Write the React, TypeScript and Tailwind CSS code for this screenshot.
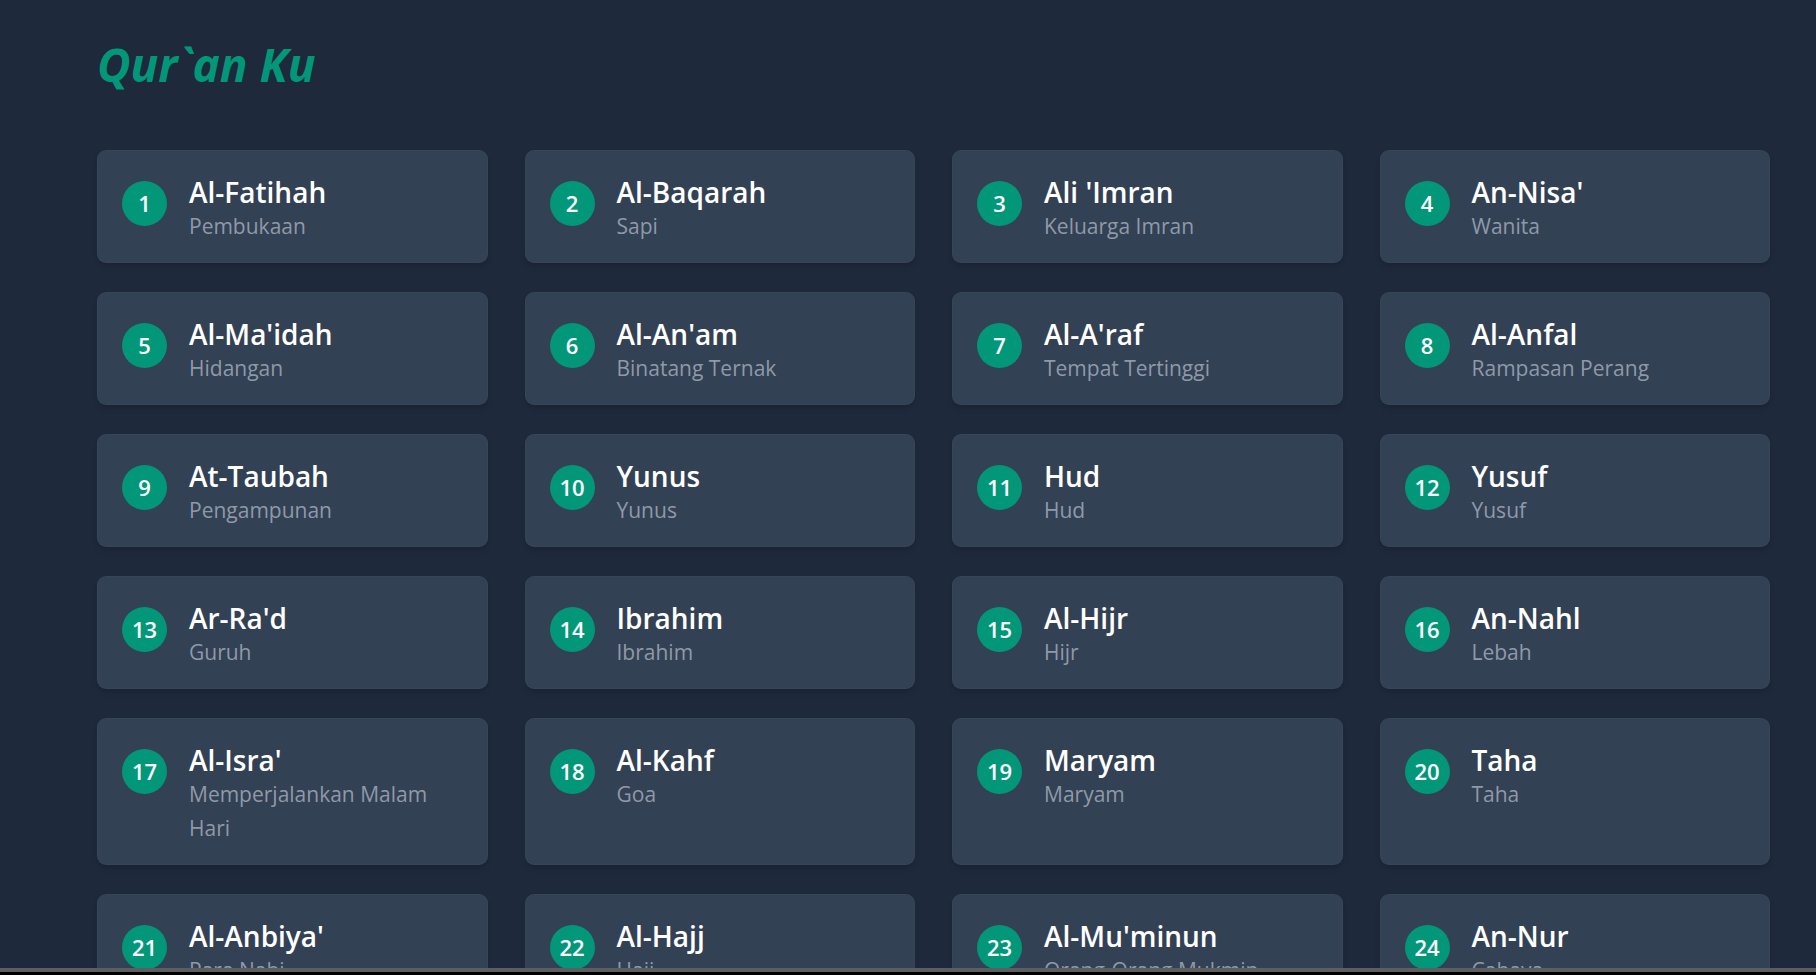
import React from 'react';

const surahs = [
  { no: 1, name: 'Al-Fatihah', arti: 'Pembukaan' },
  { no: 2, name: 'Al-Baqarah', arti: 'Sapi' },
  { no: 3, name: "Ali 'Imran", arti: 'Keluarga Imran' },
  { no: 4, name: "An-Nisa'", arti: 'Wanita' },
  { no: 5, name: "Al-Ma'idah", arti: 'Hidangan' },
  { no: 6, name: "Al-An'am", arti: 'Binatang Ternak' },
  { no: 7, name: "Al-A'raf", arti: 'Tempat Tertinggi' },
  { no: 8, name: 'Al-Anfal', arti: 'Rampasan Perang' },
  { no: 9, name: 'At-Taubah', arti: 'Pengampunan' },
  { no: 10, name: 'Yunus', arti: 'Yunus' },
  { no: 11, name: 'Hud', arti: 'Hud' },
  { no: 12, name: 'Yusuf', arti: 'Yusuf' },
  { no: 13, name: "Ar-Ra'd", arti: 'Guruh' },
  { no: 14, name: 'Ibrahim', arti: 'Ibrahim' },
  { no: 15, name: 'Al-Hijr', arti: 'Hijr' },
  { no: 16, name: 'An-Nahl', arti: 'Lebah' },
  { no: 17, name: "Al-Isra'", arti: 'Memperjalankan Malam Hari' },
  { no: 18, name: 'Al-Kahf', arti: 'Goa' },
  { no: 19, name: 'Maryam', arti: 'Maryam' },
  { no: 20, name: 'Taha', arti: 'Taha' },
  { no: 21, name: "Al-Anbiya'", arti: 'Para Nabi' },
  { no: 22, name: 'Al-Hajj', arti: 'Haji' },
  { no: 23, name: "Al-Mu'minun", arti: 'Orang-Orang Mukmin' },
  { no: 24, name: 'An-Nur', arti: 'Cahaya' },
];

function SurahCard({ no, name, arti }: { no: number; name: string; arti: string }) {
  return (
    <div className="flex items-start gap-[22px] bg-[#334155] rounded-[9px] shadow-md border border-[#3a475b]/60 pl-[24px] pr-4 pt-[25px] pb-[19px] min-h-[113px]">
      <div className="mt-[5px] w-[45px] h-[45px] shrink-0 rounded-full bg-[#03977a] flex items-center justify-center text-white text-[22px] font-semibold">
        {no}
      </div>
      <div className="min-w-0 pr-[30px]">
        <h2 className="text-white text-[28px] leading-[33px] font-semibold">{name}</h2>
        <p className="text-[#8f99a8] text-[21px] leading-[34px]">{arti}</p>
      </div>
    </div>
  );
}

export default function App() {
  return (
    <div className="h-screen overflow-hidden bg-[#1e293b] font-['Open_Sans',sans-serif] relative">
      <div className="pl-[97px] pr-[46px] pt-[41px]">
        <h1 className="text-[#03977a] text-[46px] leading-[46px] font-bold italic mb-[63px]">Qur`an Ku</h1>
        <div className="grid grid-cols-4 gap-x-[37px] gap-y-[29px]">
          {surahs.map((s) => (
            <SurahCard key={s.no} {...s} />
          ))}
        </div>
      </div>
      <div className="fixed bottom-0 left-0 right-0 h-[7px] bg-black">
        <div className="h-[4px] bg-[#5c5e62]" />
      </div>
    </div>
  );
}
